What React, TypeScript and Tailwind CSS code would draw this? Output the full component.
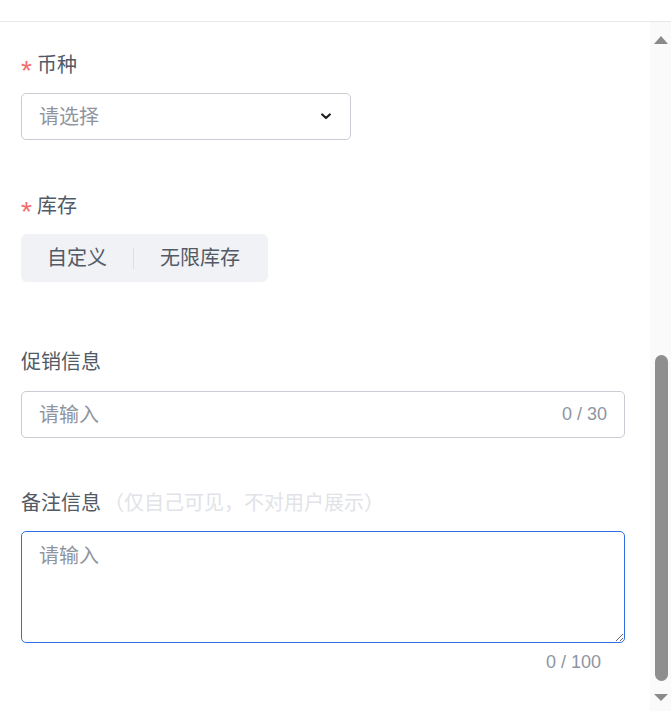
import React from "react";

function Label({
  text,
  required,
  hint,
}: {
  text: string;
  required?: boolean;
  hint?: string;
}) {
  return (
    <div className="flex h-[28px] items-center leading-[28px] text-[20px] text-[#525a67]">
      {required && (
        <span className="mr-[4px] w-[12px] translate-y-[6px] text-[28px] leading-none text-[#f56c6c]">
          *
        </span>
      )}
      <span>{text}</span>
      {hint && <span className="ml-[3px] text-[#e1e3e8]">{hint}</span>}
    </div>
  );
}

function Scrollbar() {
  return (
    <div className="flex w-[22px] flex-col bg-[#fafafa]">
      <svg className="ml-[4px] mt-[14px]" width="14" height="8" viewBox="0 0 14 8">
        <polygon points="7,0 14,8 0,8" fill="#8a8a8a" />
      </svg>
      <div className="flex flex-1 flex-col justify-end">
        <div className="ml-[5px] h-[326px] w-[13px] rounded-full bg-[#8e8e8e]" />
      </div>
      <svg className="mb-[10px] ml-[4px] mt-[13px]" width="14" height="7" viewBox="0 0 14 7">
        <polygon points="0,0 14,0 7,7" fill="#8a8a8a" />
      </svg>
    </div>
  );
}

export default function App() {
  return (
    <div
      className="flex h-[711px] w-[671px] flex-col bg-white"
      style={{ fontFamily: '"Liberation Sans", "Noto Sans CJK SC", sans-serif' }}
    >
      <div className="h-[22px] shrink-0 border-b border-[#e6e8eb]" />
      <div className="flex flex-1 overflow-hidden">
        <div className="flex-1 pl-[21px] pr-[25px] pt-[29px]">
          {/* 币种 */}
          <Label text="币种" required />
          <div className="mt-[14px] flex h-[47px] w-[330px] items-center justify-between rounded-[5px] border border-[#c9ccd2] pl-[17px] pr-[19px]">
            <span className="text-[20px] text-[#8f959f]">请选择</span>
            <svg width="10" height="7" viewBox="0 0 10 7">
              <polyline
                points="1.2,1.5 5,5 8.8,1.5"
                fill="none"
                stroke="#1f1f1f"
                strokeWidth="2.2"
                strokeLinecap="round"
                strokeLinejoin="round"
              />
            </svg>
          </div>

          {/* 库存 */}
          <div className="mt-[52px]">
            <Label text="库存" required />
          </div>
          <div className="mt-[14px] flex h-[48px] w-[247px] items-center rounded-[6px] bg-[#f0f2f5] text-[20px] text-[#525a67]">
            <span className="px-[26px]">自定义</span>
            <span className="h-[21px] w-px bg-[#dcdfe5]" />
            <span className="px-[26px]">无限库存</span>
          </div>

          {/* 促销信息 */}
          <div className="mt-[66px]">
            <Label text="促销信息" />
          </div>
          <div className="mt-[15px] flex h-[47px] w-[604px] items-center rounded-[5px] border border-[#c9ccd2] pl-[17px] pr-[17px]">
            <input
              className="min-w-0 flex-1 bg-transparent text-[20px] text-[#525a67] outline-none placeholder:text-[#8f959f]"
              placeholder="请输入"
            />
            <span className="text-[18px] text-[#8f959f]">0 / 30</span>
          </div>

          {/* 备注信息 */}
          <div className="mt-[51px]">
            <Label text="备注信息" hint="（仅自己可见，不对用户展示）" />
          </div>
          <textarea
            className="mt-[14px] block h-[112px] w-[604px] resize-y rounded-[5px] border border-[#2f6fe4] px-[17px] pt-[10px] text-[20px] leading-[28px] text-[#525a67] outline-none placeholder:text-[#8f959f]"
            placeholder="请输入"
          />
          <div className="mt-[7px] w-[604px] pr-[24px] text-right text-[18px] leading-[24px] text-[#8f959f]">
            0 / 100
          </div>
        </div>
        <Scrollbar />
      </div>
    </div>
  );
}
